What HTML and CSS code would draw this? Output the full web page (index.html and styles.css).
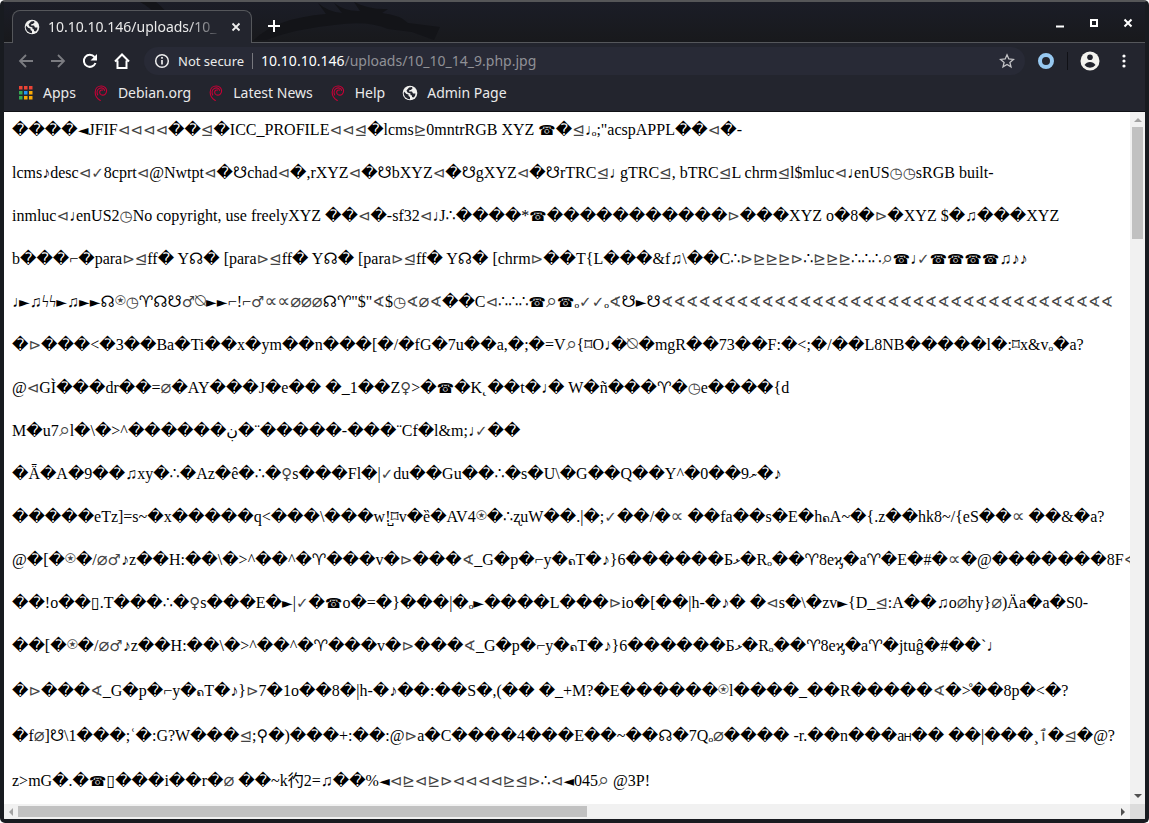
FILE: index.html
```html
<!DOCTYPE html>
<html lang="en">
<head>
<meta charset="utf-8">
<title>10.10.10.146/uploads/10_10_14_9.php.jpg</title>
<link rel="stylesheet" href="styles.css">
</head>
<body>
<svg class="defs" aria-hidden="true">
  <symbol id="globe" viewBox="0 0 16 16"><circle cx="8" cy="8" r="7.3" fill="#f1f1ef"/><path d="M2 6.500 4.500 9l2 .5v1.500l1.500 1v2.200L6 14 3 12 1.700 9zM7 2.500l3-.5.5 1.500-1.600 1.500L7.500 5 7 6.500h3l1 2h2.500l-.5 2.500-1.500 1.500-1.500-.5v-1.500L8.500 10V8.500L5.500 7.500 4.500 5.500z" fill="#23252e"/></symbol>
  <symbol id="swirl" viewBox="0 0 16 16"><path d="M7.300 15.500C4 13.500 2 10.500 2.200 7 2.400 3 5.200.9 8.400 1c3.300.1 5.300 2.300 5.200 5-.1 2.500-2 4.200-4 4.100-2-.1-3.200-1.700-2.900-3.300.3-1.500 1.700-2.200 2.900-1.700M4.700 10C3.600 7.500 4 4.500 6.700 3.300c2.300-1 4.600 0 4.900 2.200" fill="none" stroke="#c70036" stroke-width="1.100" stroke-linecap="round"/></symbol>
</svg>
<div class="window">
  <header class="titlebar">
    <svg class="dragon" viewBox="0 0 360 40" aria-hidden="true"><path d="M20 0q20 10 28 38h10Q52 12 36 0zM134 38q22-22 72-26l-8-11q10 9 24 10l-8-10q12 9 26 8L234 0q16 8 34 7l-6 4q18 2 26 10l32 4-6 13-22-8-24-3q-20-9-54-4-40 4-68 15z"/></svg>
    <div class="tab">
      <svg class="icon16"><use href="#globe"/></svg>
      <span class="tab-title">10.10.10.146/uploads/10_</span>
      <button class="plain" aria-label="Close tab"><svg width="10" height="10"><path d="m1.500 1.500 7 7m0-7-7 7" stroke="#eee" stroke-width="1.800"/></svg></button>
    </div>
    <button class="plain new-tab" aria-label="New tab"><svg width="12" height="12"><path d="M6 0v12M0 6h12" stroke="#fff" stroke-width="2"/></svg></button>
    <div class="window-buttons">
      <button class="plain" aria-label="Minimize"><svg width="10" height="10"><path d="M1 8.500h8" stroke="#fff" stroke-width="2"/></svg></button>
      <button class="plain" aria-label="Maximize"><svg width="10" height="10"><path d="M2 2h6v6H2z" fill="none" stroke="#fff" stroke-width="2"/></svg></button>
      <button class="plain" aria-label="Close"><svg width="10" height="10"><path d="m1.500 1.500 7 7m0-7-7 7" stroke="#fff" stroke-width="2"/></svg></button>
    </div>
  </header>
  <nav class="toolbar">
    <button class="plain" aria-label="Back"><svg width="16" height="16"><path d="M15 8H2m6-6L2 8l6 6" fill="none" stroke="#7b7c81" stroke-width="1.800"/></svg></button>
    <button class="plain" aria-label="Forward"><svg width="16" height="16"><path d="M1 8h13M8 2l6 6-6 6" fill="none" stroke="#7b7c81" stroke-width="1.800"/></svg></button>
    <button class="plain" aria-label="Reload"><svg width="16" height="16"><path d="M13.500 10A6 6 0 1 1 12.500 4" fill="none" stroke="#fff" stroke-width="2"/><path d="M15 1v6.500H8.500z" fill="#fff"/></svg></button>
    <button class="plain" aria-label="Home"><svg width="16" height="16"><path d="M3.500 7.500V15h9V7.500M1 8.500 8 1.500l7 7" fill="none" stroke="#fff" stroke-width="2"/></svg></button>
    <div class="address">
      <svg width="16" height="16"><circle cx="8" cy="8" r="6.300" fill="none" stroke="#eee" stroke-width="1.500"/><path d="M8 7v4.500M8 4v1.700" stroke="#eee" stroke-width="1.700"/></svg>
      <span class="secure">Not secure</span>
      <span class="url"><span class="host">10.10.10.146</span>/uploads/10_10_14_9.php.jpg</span>
      <button class="plain star" aria-label="Bookmark"><svg width="16" height="16"><path d="m8 1.800 1.800 4.200 4.600.4-3.500 3 1.100 4.500L8 11.500l-4 2.400 1.100-4.500-3.500-3 4.600-.4z" fill="none" stroke="#c3c3c6" stroke-width="1.300"/></svg></button>
    </div>
    <button class="plain" aria-label="Extension"><svg width="18" height="18"><circle cx="9" cy="9" r="6" fill="none" stroke="#97c9f1" stroke-width="4"/></svg></button>
    <span class="divider"></span>
    <button class="plain" aria-label="Profile"><svg width="20" height="20"><circle cx="10" cy="10" r="9.500" fill="#f3f3ef"/><circle cx="10" cy="6.300" r="2.800" fill="#23252e"/><path d="M4.500 14q2-3 5.500-3t5.500 3q-2 2.700-5.500 2.700T4.500 14" fill="#23252e"/></svg></button>
    <button class="plain" aria-label="Menu"><svg width="16" height="16"><g fill="#fff"><circle cx="8" cy="3" r="1.600"/><circle cx="8" cy="8" r="1.600"/><circle cx="8" cy="13" r="1.600"/></g></svg></button>
  </nav>
  <nav class="bookmarks">
    <a href="#"><svg class="icon16"><g fill="#ea4335"><path d="M1 1h3.500v3.500H1zM6 1h3.500v3.500H6zM11 1h3.500v3.500H11z"/></g><path d="M1 6h3.500v3.500H1zM1 11h3.500v3.500H1z" fill="#34a853"/><path d="M6 6h3.500v3.500H6z" fill="#2196f3"/><path d="M11 6h3.500v3.500H11zM6 11h3.500v3.500H6zM11 11h3.500v3.500H11z" fill="#fbab05"/></svg>Apps</a>
    <a href="#"><svg class="icon16"><use href="#swirl"/></svg>Debian.org</a>
    <a href="#"><svg class="icon16"><use href="#swirl"/></svg>Latest News</a>
    <a href="#"><svg class="icon16"><use href="#swirl"/></svg>Help</a>
    <a href="#"><svg class="icon16"><use href="#globe"/></svg>Admin Page</a>
  </nav>
  <div class="viewport">
    <main class="page">
      <p>����<i>◄</i>JFIF<b>⊲⊲⊲⊲</b>��<b>⊴</b>�ICC_PROFILE<b>⊲⊲⊴</b>�lcms<b>⊵</b>0mntrRGB XYZ <i>☎</i>�<b>⊴</b><s>♩</s>ₒ;"acspAPPL��<b>⊲</b>�-</p>
      <p>lcms♪desc<b>⊲✓</b>8cprt<b>⊲</b>@Nwtpt<b>⊲</b>�☋chad<b>⊲</b>�,rXYZ<b>⊲</b>�☋bXYZ<b>⊲</b>�☋gXYZ<b>⊲</b>�☋rTRC<b>⊴</b><s>♩</s> gTRC<b>⊴</b>, bTRC<b>⊴</b>L chrm<b>⊴</b>l$mluc<b>⊲</b><s>♩</s>enUS<b>◷◷</b>sRGB built-</p>
      <p>inmluc<b>⊲</b><s>♩</s>enUS2<b>◷</b>No copyright, use freelyXYZ ��<b>⊲</b>�-sf32<b>⊲</b><s>♩</s>J∴����*<i>☎</i>�����������<b>⊳</b>���XYZ o�8�<b>⊳</b>�XYZ $�♫���XYZ</p>
      <p>b���⌐�para<b>⊳⊴</b>ff� Y☊� [para<b>⊳⊴</b>ff� Y☊� [para<b>⊳⊴</b>ff� Y☊� [chrm<b>⊳</b>��T{L���&amp;f♫\��C∴<b>⊳⊵⊵⊵⊳</b>∴<b>⊵⊵⊵</b>∴∴∴<u class="big">⌕</u><i>☎</i><s>♩</s><b>✓</b><i>☎☎☎☎</i>♫♪♪</p>
      <p><s>♩</s><i>►</i>♫ϟϟ<i>►</i>♫<i>►►</i>☊<u>⍟</u><b>◷</b>♈︎☊☋<b>♂</b><u>⍉</u><i>►►</i>⌐!⌐<b>♂</b><u>∝∝⌀⌀⌀</u>☊♈︎"$"<b>∢</b>$<b>◷∢</b><u>⌀</u><b>∢</b>��C<b>⊲</b>∴∴∴<i>☎</i><u class="big">⌕</u><i>☎</i>ₒ<b>✓✓</b>ₒ<b>∢</b>☋<i>►</i>☋<b>∢∢∢∢∢∢∢∢∢∢∢∢∢∢∢∢∢∢∢∢∢∢∢∢∢∢∢∢∢∢∢∢∢∢∢∢</b></p>
      <p>�<b>⊳</b>���&lt;�3��Ba�Ti��x�ym��n���[�/�fG�7u��a,�;�=V<u class="big">⌕</u>{⌑O<s>♩</s>�<u>⍉</u>�mgR��73��F:�&lt;;�/��L8NB�����l�:⌑x&amp;vₒ�a?</p>
      <p>@<b>⊲</b>GÌ���dr��=<u>⌀</u>�AY���J�e�� �_1��Z<b>♀</b>&gt;�<i>☎</i>�K˛��t�<s>♩</s>� W�ñ���♈︎�<b>◷</b>e����{d</p>
      <p>M�u7<u class="big">⌕</u>l�\�&gt;^������ڹ�¨�����-���¨Cf�l&amp;m;<s>♩</s><b>✓</b>��</p>
      <p>�Ǟ�A�9��♫xy�∴�Az�ê�∴�<b>♀</b>s���Fl�|<b>✓</b>du��Gu��∴�s�U\�G��Q��Y^�0��9<small>ނ</small>�♪</p>
      <p>�����eTz]=s~�x�����q&lt;���\���w!̺⌑v�ȅ�AV4<u>⍟</u>�∴ʐuW��.|�;<b>✓</b>��/�<u>∝</u> ��fa��s�E�h<small>ຄ</small>A~�{.z��hk8~/{eS��<u>∝</u> ��&amp;�a?</p>
      <p>@�[�<u>⍟</u>�/<u>⌀</u><b>♂</b>♪z��H:��\�&gt;^��^�♈︎���v�<b>⊳</b>���<b>∢</b>_G�p�⌐y�<small>ຄ</small>T�♪}6������Бޅ�Rₒ��♈︎8eϗ�a♈︎�E�#�<u>∝</u>�@�������8F<b>∢</b></p>
      <p>��!o��▯.T���∴�<b>♀</b>s���E�<i>►</i>|<b>✓</b>�<i>☎</i>o�=�}���|�ₒ<i>►</i>����L���<b>⊳</b>io�[��|h-�♪� �<b>⊲</b>s�\�zv<i>►</i>{D_<b>⊴</b>:A��♫o<u>⌀</u>hy}<u>⌀</u>)Äa�a�S0-</p>
      <p>��[�<u>⍟</u>�/<u>⌀</u><b>♂</b>♪z��H:��\�&gt;^��^�♈︎���v�<b>⊳</b>���<b>∢</b>_G�p�⌐y�<small>ຄ</small>T�♪}6������Бޅ�Rₒ��♈︎8eϗ�a♈︎�jtuĝ�#��`<s>♩</s></p>
      <p class="tall">�<b>⊳</b>���<b>∢</b>_G�p�⌐y�<small>ຄ</small>T�♪}<b>⊳</b>7�1o��8�|h-�♪��:��S�,(�� �_+M?�E������<u>⍟</u>l����_��R�����<b>∢</b>�&gt;̊��8p�&lt;�?</p>
      <p class="tall">�f<u>⌀</u>]☋\1���;ʿ�:G?W���<b>⊴</b>;⚲�)���+:��:@<b>⊳</b>a�C����4���E��~��☊�7Qₒ<u>⌀</u>���� -r.��n���a<small>Ꮋ</small>�� ��|���¸<b>ٱ</b>�<b>⊴</b>�@?</p>
      <p class="tall">z&gt;mG�.�<i>☎</i>▯���i��r�<u>⌀</u> ��~k彴2=♫��%<i>◄</i><b>⊲⊵⊲⊵⊳⊲⊲⊲⊲⊵⊴⊳</b>∴<b>⊲</b><i>◄</i>045<u class="big">⌕</u> @3P!</p>
    </main>
    <div class="scroll-y"><span class="arrow up"></span><span class="thumb"></span><span class="arrow down"></span></div>
    <div class="scroll-x"><span class="arrow left"></span><span class="thumb"></span><span class="arrow right"></span></div>
    <div class="corner"></div>
  </div>
</div>
</body>
</html>
```
FILE: styles.css
```css
* { box-sizing: border-box; }
body { margin: 0; background: #fff; }
.defs { position: absolute; width: 0; height: 0; }
.window {
  height: 100vh;
  display: flex;
  flex-direction: column;
  border: solid #181b20;
  border-width: 2px 4px 4px;
  border-top-color: #555658;
  border-radius: 5px;
  background: #23252e;
  color: #eaeaea;
  font: 14px/20px "Noto Sans", sans-serif;
  overflow: hidden;
}
.plain { display: flex; padding: 0; border: 0; background: none; }
.icon16 { width: 16px; height: 16px; flex: none; }
.titlebar {
  position: relative;
  display: flex;
  align-items: flex-end;
  height: 41px;
  padding-left: 8px;
  border-bottom: 1px solid #55575b;
  background: linear-gradient(#1b1d27, #18191c);
}
.dragon { position: absolute; left: 116px; top: 0; width: 360px; height: 40px; fill: #131418; }
.tab {
  position: relative;
  display: flex;
  align-items: center;
  gap: 8px;
  width: 240px;
  height: 33px;
  margin-bottom: -1px;
  padding: 0 10px 0 11px;
  border: 1px solid #55575b;
  border-bottom: 0;
  border-radius: 8px 8px 0 0;
  background: #23252e;
}
.tab-title {
  flex: 1;
  white-space: nowrap;
  mask-image: linear-gradient(90deg, #000 80%, transparent);
}
.new-tab { position: relative; margin: 0 16px 10px; }
.window-buttons { display: flex; gap: 24px; margin: 0 12px 14px auto; }
.toolbar { display: flex; align-items: center; gap: 16px; height: 36px; padding: 0 13px 0 14px; }
.address {
  flex: 1;
  display: flex;
  align-items: center;
  gap: 8px;
  height: 28px;
  margin: 0 -4px 0 -2px;
  padding: 0 10px;
  border-radius: 14px;
  background: #282a36;
}
.secure { font-size: 13px; }
.url { padding-left: 8px; border-left: 1px solid #77787e; line-height: 16px; color: #909196; }
.host { color: #fff; }
.star { margin-left: auto; }
.divider { width: 1px; height: 18px; background: #101116; margin: 0 -4px; }
.bookmarks { display: flex; gap: 17px; height: 33px; padding: 0 14px 4px; align-items: center; border-bottom: 1px solid #101116; }
.bookmarks a { display: flex; align-items: center; gap: 9px; color: inherit; text-decoration: none; }
.viewport {
  flex: 1;
  min-height: 0;
  display: grid;
  grid-template: minmax(0, 1fr) 15px / minmax(0, 1fr) 15px;
  background: #fff;
}
.page {
  overflow: hidden;
  padding: 0 8px;
  color: #000;
  font: 16px/43px "Liberation Serif", "DejaVu Sans", "Noto Sans CJK SC", serif;
}
.page p { height: 43px; margin: 0; white-space: nowrap; unicode-bidi: bidi-override; }
.page p:first-child { height: 39px; line-height: 35px; }
.page .tall { height: 45px; line-height: 47px; }
.page i, .page b, .page u {
  font: 15px/1 "DejaVu Sans", sans-serif;
  text-decoration: none;
}
.page i { font-size: 14px; }
.page b { color: #444; }
.page u { color: #444; font-size: 18px; }
.page .big { font-size: 20px; }
.page s { display: inline-block; width: 7px; line-height: 1; text-decoration: none; }
.page small { font-size: 11px; line-height: 1; }
.scroll-y, .scroll-x { display: flex; align-items: center; background: #f1f1f1; }
.scroll-y { flex-direction: column; padding: 6px 0; }
.scroll-x { padding: 0 5px; }
.thumb { background: #c1c1c1; }
.scroll-y .thumb { width: 11px; height: 112px; margin-top: 5px; }
.scroll-x .thumb { height: 11px; width: 51%; margin-left: 5px; }
.arrow { border: 4px solid transparent; }
.up { border-top: 0; border-bottom-color: #a3a3a3; }
.left { border-left: 0; border-right-color: #a3a3a3; }
.down { margin-top: auto; border-bottom: 0; border-top-color: #505050; }
.right { margin-left: auto; border-right: 0; border-left-color: #505050; }
.corner { background: #dcdcdc; }
```
